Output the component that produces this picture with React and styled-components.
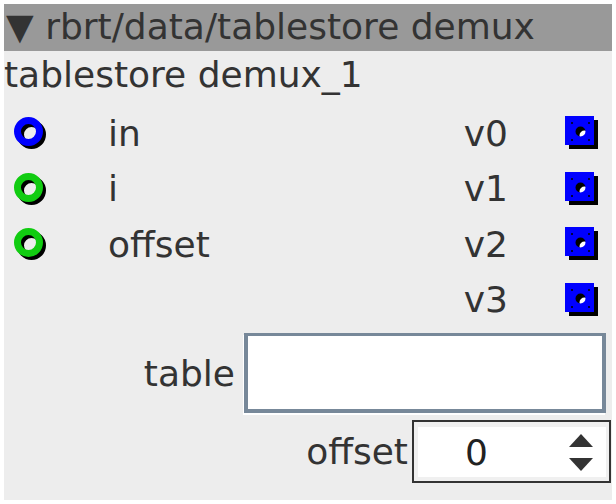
import React from "react";
import styled, { createGlobalStyle } from "styled-components";

const GlobalStyle = createGlobalStyle`
  body {
    margin: 0;
    background: #ffffff;
  }
`;

const Node = styled.div`
  margin: 4px;
  width: 608px;
  height: 496px;
  box-sizing: border-box;
  background: #ededed;
  color: #333333;
  font-family: "DejaVu Sans", "Liberation Sans", sans-serif;
  font-size: 36px;
  line-height: normal;
  display: flex;
  flex-direction: column;
`;

const Header = styled.div`
  background: #999999;
  height: 47px;
  box-sizing: border-box;
  padding: 2px 2px;
  white-space: nowrap;
`;

const Title = styled.div`
  padding-top: 3px;
  height: 45px;
  box-sizing: border-box;
  white-space: nowrap;
`;

const Ports = styled.div`
  display: grid;
  grid-template-columns: 1fr auto;
  padding-top: 9.25px;
`;

const Column = styled.div`
  display: flex;
  flex-direction: column;
`;

const PortRow = styled.div`
  display: flex;
  align-items: center;
  height: 55.5px;
  justify-content: ${p => (p.$side === "out" ? "flex-end" : "flex-start")};
  padding: ${p => (p.$side === "out" ? "0 13px 0 0" : "0 0 0 8px")};
`;

const PortLabel = styled.span`
  margin: ${p => (p.$side === "out" ? "0 57px 0 0" : "0 0 0 60px")};
  white-space: nowrap;
`;

const Controls = styled.div`
  display: flex;
  flex-direction: column;
  align-items: flex-end;
  padding-top: 5.75px;
`;

const ControlRow = styled.div`
  display: flex;
  align-items: center;
  gap: ${p => p.$gap}px;
  margin-top: ${p => p.$top || 0}px;
  margin-right: ${p => p.$right}px;
`;

const TextBox = styled.div`
  width: 362px;
  height: 80px;
  box-sizing: border-box;
  background: #ffffff;
  border: 4px solid #778899;
  border-top-width: 3px;
  box-shadow: -1px 2px 0 #ffffff;
`;

const SpinBox = styled.div`
  width: 199px;
  height: 63px;
  box-sizing: border-box;
  border: 2px solid #333333;
  background: #f0f0f0;
  padding: 5px 3px 4px 4px;
  display: flex;
`;

const SpinInner = styled.div`
  flex: 1;
  background: #ffffff;
  display: flex;
  align-items: center;
  padding-left: 47px;
  padding-right: 13px;
`;

const SpinValue = styled.span`
  flex: 1;
  color: #222222;
`;

const Circle = ({ color }) => (
  <svg width="36" height="36" viewBox="0 0 36 36">
    <circle cx="19.5" cy="19.5" r="11" fill="none" stroke="#000" strokeWidth="7" />
    <circle cx="16.5" cy="16.5" r="11" fill="none" stroke={color} strokeWidth="7" />
  </svg>
);

const squarePath =
  "M0 0H29V29H0Z M10.5 15.5a5 5 0 1 0 10 0a5 5 0 1 0 -10 0Z";

const Square = () => (
  <svg width="34" height="34" viewBox="0 0 34 34">
    <circle cx="15.5" cy="15.5" r="5" fill="#ffffff" />
    <path d={squarePath} fill="#000" fillRule="evenodd" transform="translate(4 4)" />
    <path d={squarePath} fill="#0000ff" fillRule="evenodd" />
    {[
      [7, 7],
      [24, 7],
      [7, 24],
      [24, 24]
    ].map(([x, y]) => (
      <circle key={`${x}-${y}`} cx={x} cy={y} r="1" fill="#000" />
    ))}
  </svg>
);

const Spinner = () => (
  <svg width="24" height="37" viewBox="0 0 24 37">
    <path d="M12 0L24 13H0Z" fill="#333" />
    <path d="M0 24H24L12 37Z" fill="#333" />
  </svg>
);

const inputs = [
  { name: "in", color: "#0000ff" },
  { name: "i", color: "#11cc11" },
  { name: "offset", color: "#11cc11" }
];

const outputs = ["v0", "v1", "v2", "v3"];

export default function App() {
  return (
    <>
      <GlobalStyle />
      <Node>
        <Header>▼ rbrt/data/tablestore demux</Header>
        <Title>tablestore demux_1</Title>
        <Ports>
          <Column>
            {inputs.map(input => (
              <PortRow key={input.name} $side="in">
                <Circle color={input.color} />
                <PortLabel $side="in">{input.name}</PortLabel>
              </PortRow>
            ))}
          </Column>
          <Column>
            {outputs.map(name => (
              <PortRow key={name} $side="out">
                <PortLabel $side="out">{name}</PortLabel>
                <Square />
              </PortRow>
            ))}
          </Column>
        </Ports>
        <Controls>
          <ControlRow $gap={9} $right={6}>
            <span>table</span>
            <TextBox />
          </ControlRow>
          <ControlRow $gap={4} $top={7} $right={1}>
            <span>offset</span>
            <SpinBox>
              <SpinInner>
                <SpinValue>0</SpinValue>
                <Spinner />
              </SpinInner>
            </SpinBox>
          </ControlRow>
        </Controls>
      </Node>
    </>
  );
}
